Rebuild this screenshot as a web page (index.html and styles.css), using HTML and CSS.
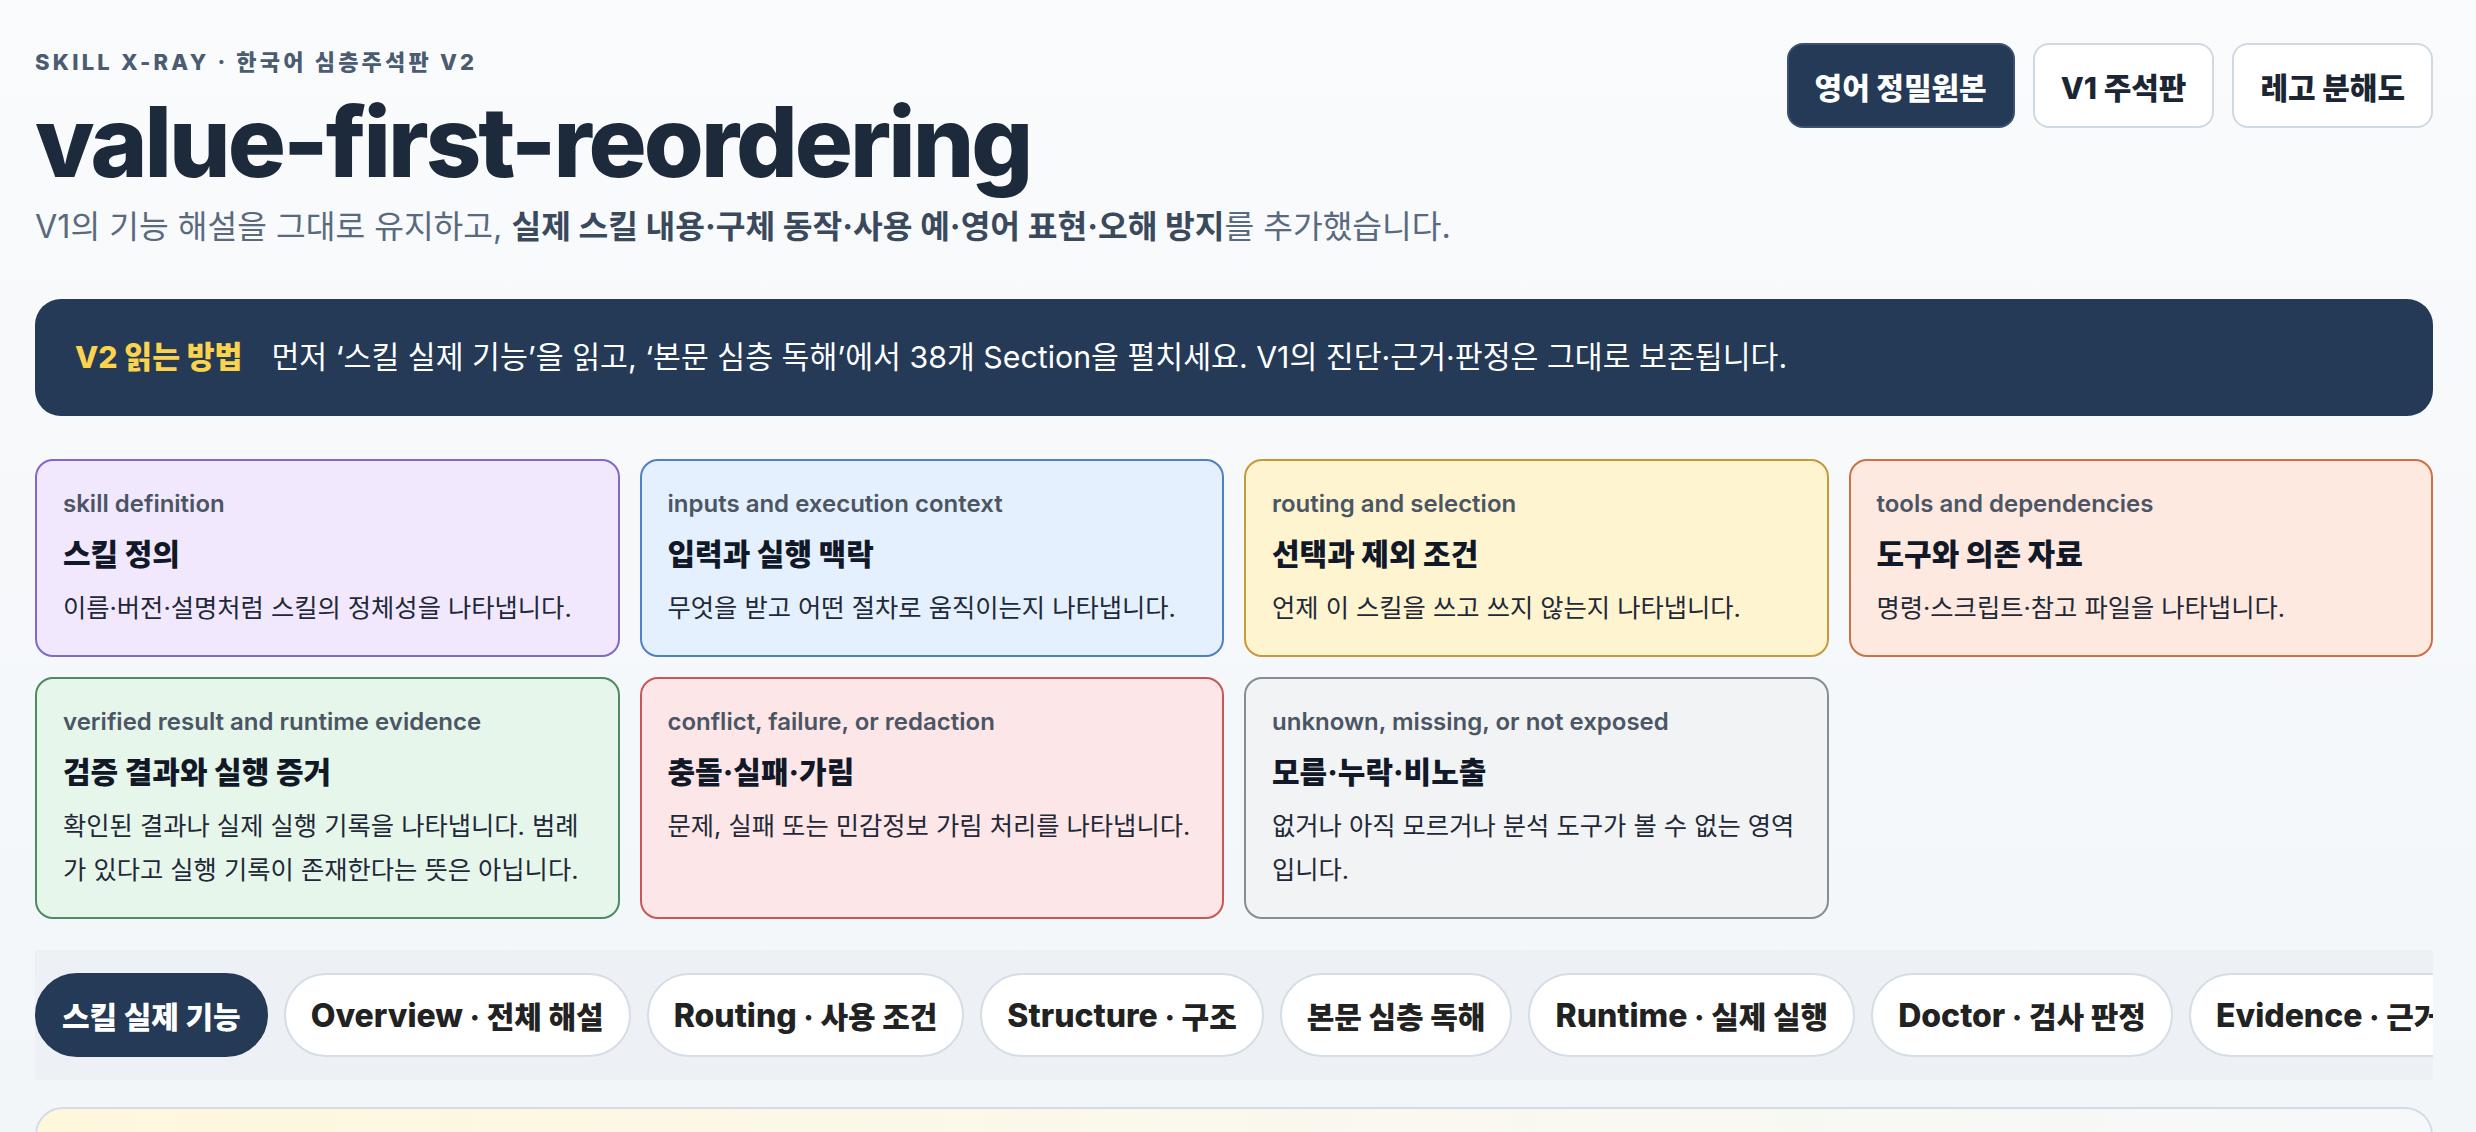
FILE: index.html
```html
<!DOCTYPE html>
<html lang="ko">
<head>
<meta charset="utf-8">
<title>value-first-reordering · Skill X-Ray V2</title>
<link rel="stylesheet" href="styles.css">
</head>
<body>
<div class="page">
  <header class="top">
    <div class="heading">
      <div class="eyebrow">SKILL X-RAY · 한국어 심층주석판 V2</div>
      <h1 class="title">value-first-reordering</h1>
      <p class="lede">V1의 기능 해설을 그대로 유지하고, <strong>실제 스킬 내용·구체 동작·사용 예·영어 표현·오해 방지</strong>를 추가했습니다.</p>
    </div>
    <nav class="actions">
      <a class="btn primary">영어 정밀원본</a>
      <a class="btn">V1 주석판</a>
      <a class="btn">레고 분해도</a>
    </nav>
  </header>

  <section class="guide">
    <span class="guide-label">V2 읽는 방법</span>
    <span class="guide-text">먼저 ‘스킬 실제 기능’을 읽고, ‘본문 심층 독해’에서 38개 Section을 펼치세요. V1의 진단·근거·판정은 그대로 보존됩니다.</span>
  </section>

  <section class="legend">
    <div class="card purple">
      <div class="card-label">skill definition</div>
      <div class="card-title">스킬 정의</div>
      <div class="card-desc">이름·버전·설명처럼 스킬의 정체성을 나타냅니다.</div>
    </div>
    <div class="card blue">
      <div class="card-label">inputs and execution context</div>
      <div class="card-title">입력과 실행 맥락</div>
      <div class="card-desc">무엇을 받고 어떤 절차로 움직이는지 나타냅니다.</div>
    </div>
    <div class="card yellow">
      <div class="card-label">routing and selection</div>
      <div class="card-title">선택과 제외 조건</div>
      <div class="card-desc">언제 이 스킬을 쓰고 쓰지 않는지 나타냅니다.</div>
    </div>
    <div class="card orange">
      <div class="card-label">tools and dependencies</div>
      <div class="card-title">도구와 의존 자료</div>
      <div class="card-desc">명령·스크립트·참고 파일을 나타냅니다.</div>
    </div>
    <div class="card green">
      <div class="card-label">verified result and runtime evidence</div>
      <div class="card-title">검증 결과와 실행 증거</div>
      <div class="card-desc">확인된 결과나 실제 실행 기록을 나타냅니다. 범례가 있다고 실행 기록이 존재한다는 뜻은 아닙니다.</div>
    </div>
    <div class="card red">
      <div class="card-label">conflict, failure, or redaction</div>
      <div class="card-title">충돌·실패·가림</div>
      <div class="card-desc">문제, 실패 또는 민감정보 가림 처리를 나타냅니다.</div>
    </div>
    <div class="card gray">
      <div class="card-label">unknown, missing, or not exposed</div>
      <div class="card-title">모름·누락·비노출</div>
      <div class="card-desc">없거나 아직 모르거나 분석 도구가 볼 수 없는 영역입니다.</div>
    </div>
  </section>

  <nav class="tabs">
    <a class="tab active">스킬 실제 기능</a>
    <a class="tab"><span class="en">Overview</span> · 전체 해설</a>
    <a class="tab"><span class="en">Routing</span> · 사용 조건</a>
    <a class="tab"><span class="en">Structure</span> · 구조</a>
    <a class="tab">본문 심층 독해</a>
    <a class="tab"><span class="en">Runtime</span> · 실제 실행</a>
    <a class="tab"><span class="en">Doctor</span> · 검사 판정</a>
    <a class="tab"><span class="en">Evidence</span> · 근거 자료</a>
    <a class="tab"><span class="en">Reference</span> · 참고</a>
  </nav>

  <section class="panel"></section>
</div>
</body>
</html>
```

FILE: styles.css
```css
* { box-sizing: border-box; }

html, body {
  margin: 0;
  height: 100%;
}

body {
  background: linear-gradient(180deg, #f9fbfc 0%, #f3f6f9 100%);
  font-family: Inter, "Noto Sans CJK KR", sans-serif;
  color: #1e293b;
  overflow: hidden;
}

.page {
  padding: 43px 43px 0 35px;
}

/* ---------- header ---------- */
.top {
  display: flex;
  justify-content: space-between;
  align-items: flex-start;
}

.eyebrow {
  margin-top: 5px;
  font-size: 22px;
  line-height: 28px;
  font-weight: 800;
  letter-spacing: 3.2px;
  color: #4b5c70;
}

.title {
  margin: 17px 0 0;
  font-size: 97px;
  line-height: 98px;
  font-weight: 800;
  letter-spacing: -3px;
  color: #1c2a3b;
}

.lede {
  margin: 14px 0 0;
  font-size: 32.3px;
  line-height: 44px;
  color: #5a6a7e;
}

.lede strong {
  font-weight: 700;
  color: #3a495c;
}

.actions {
  display: flex;
  gap: 18px;
}

.btn {
  display: flex;
  align-items: center;
  height: 85px;
  padding: 0 26px;
  border: 2px solid #cfd9e4;
  border-radius: 16px;
  background: #fff;
  font-size: 30px;
  font-weight: 800;
  color: #1c2633;
  white-space: nowrap;
}

.btn.primary {
  background: #243a57;
  border-color: #3b5170;
  color: #fff;
}

/* ---------- guide banner ---------- */
.guide {
  display: flex;
  align-items: center;
  gap: 29px;
  margin-top: 50px;
  padding: 37px 40px;
  background: #243a57;
  border-radius: 26px;
  font-size: 30.3px;
  line-height: 43px;
  color: #fff;
}

.guide-label {
  font-weight: 800;
  color: #fcd34d;
  white-space: nowrap;
}

/* ---------- legend cards ---------- */
.legend {
  display: grid;
  grid-template-columns: repeat(4, 1fr);
  gap: 20px;
  margin-top: 43px;
}

.card {
  border: 2px solid;
  border-radius: 18px;
  padding: 28px 26px 25px;
}

.card-label {
  font-size: 24px;
  line-height: 30px;
  font-weight: 600;
  color: #4b5563;
}

.card-title {
  margin-top: 15px;
  font-size: 30px;
  line-height: 40px;
  font-weight: 800;
  color: #111827;
}

.card-desc {
  margin-top: 12px;
  font-size: 25.3px;
  line-height: 44px;
  color: #1f2937;
}

.purple { background: #f2e8fd; border-color: #8368c9; }
.blue   { background: #e4f0fd; border-color: #4f7fc4; }
.yellow { background: #fef4d0; border-color: #c49a3c; }
.orange { background: #fde9e0; border-color: #cf6f45; }
.green  { background: #e6f6eb; border-color: #4e8b60; }
.red    { background: #fde6e8; border-color: #c95757; }
.gray   { background: #f1f3f5; border-color: #868d96; }

/* ---------- tabs ---------- */
.tabs {
  display: flex;
  gap: 16px;
  margin-top: 31px;
  padding: 23px 0;
  background: #edf1f5;
  overflow: hidden;
}

.tab {
  flex-shrink: 0;
  display: flex;
  align-items: center;
  height: 84px;
  padding: 0 25px;
  border: 2px solid #d5dde6;
  border-radius: 999px;
  background: #fff;
  font-size: 30px;
  font-weight: 800;
  color: #222;
  white-space: pre;
}

.tab .en {
  font-size: 32px;
}

.tab.active {
  background: #243a57;
  border-color: #243a57;
  color: #fff;
}

/* ---------- content panel ---------- */
.panel {
  margin-top: 27px;
  height: 300px;
  border: 2px solid #d3dce6;
  border-radius: 28px;
  background: linear-gradient(90deg, #fff7dc 0%, #fbf8ec 45%, #f6f8fa 100%);
}
```
